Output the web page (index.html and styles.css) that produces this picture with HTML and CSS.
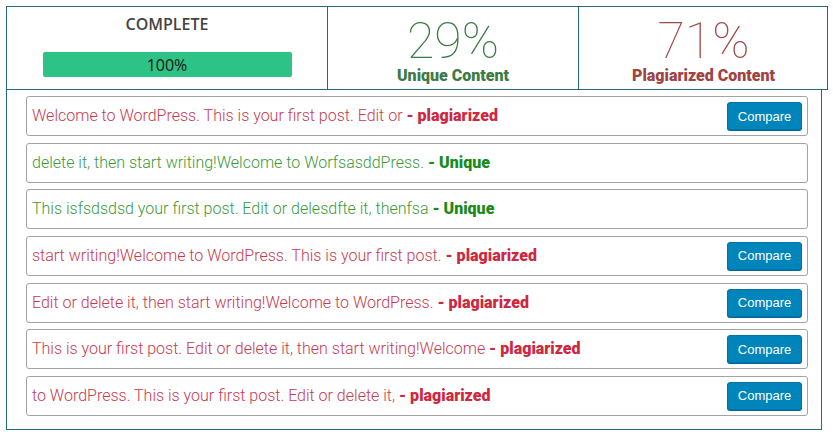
FILE: index.html
```html
<!DOCTYPE html>
<html>
<head>
<meta charset="utf-8">
<link rel="stylesheet" href="styles.css">
</head>
<body>
<div class="wrap">
  <div class="summary">
    <div class="cell cell-complete">
      <div class="complete-title">COMPLETE</div>
      <div class="bar"><span>100%</span></div>
    </div>
    <div class="cell cell-stat">
      <div class="pct pct-unique">29%</div>
      <div class="stat-label label-unique">Unique Content</div>
    </div>
    <div class="cell cell-stat">
      <div class="pct pct-plag">71%</div>
      <div class="stat-label label-plag">Plagiarized Content</div>
    </div>
  </div>
  <div class="results">
    <div class="row plag">
      <p class="sentence">Welcome to WordPress. This is your first post. Edit or <b>- plagiarized</b></p>
      <button class="compare">Compare</button>
    </div>
    <div class="row uniq">
      <p class="sentence">delete it, then start writing!Welcome to WorfsasddPress. <b>- Unique</b></p>
    </div>
    <div class="row uniq">
      <p class="sentence">This isfsdsdsd your first post. Edit or delesdfte it, thenfsa <b>- Unique</b></p>
    </div>
    <div class="row plag">
      <p class="sentence">start writing!Welcome to WordPress. This is your first post. <b>- plagiarized</b></p>
      <button class="compare">Compare</button>
    </div>
    <div class="row plag">
      <p class="sentence">Edit or delete it, then start writing!Welcome to WordPress. <b>- plagiarized</b></p>
      <button class="compare">Compare</button>
    </div>
    <div class="row plag">
      <p class="sentence">This is your first post. Edit or delete it, then start writing!Welcome <b>- plagiarized</b></p>
      <button class="compare">Compare</button>
    </div>
    <div class="row plag">
      <p class="sentence">to WordPress. This is your first post. Edit or delete it, <b>- plagiarized</b></p>
      <button class="compare">Compare</button>
    </div>
  </div>
</div>
</body>
</html>
```
FILE: styles.css
```css
* { box-sizing: border-box; }
html, body { margin: 0; padding: 0; background: #fff; }
body { font-family: Roboto, "Liberation Sans", sans-serif; }

.wrap {
  padding: 6px 0 0 6px;
  width: 833px;
}

.summary {
  display: grid;
  grid-template-columns: 320px 251px 250px;
  width: 822px;
  height: 84px;
  border: 1px solid #226c76;
}
.cell {
  display: flex;
  flex-direction: column;
  align-items: center;
}
.cell + .cell { border-left: 1px solid #226c76; }

.cell-complete { padding-top: 7px; }
.complete-title {
  font-family: "Open Sans", sans-serif;
  font-weight: 600;
  font-size: 16px;
  line-height: 20px;
  color: #444;
}
.bar {
  margin-top: 18px;
  width: 249px;
  height: 25px;
  background: #2dc386;
  border-radius: 2px;
  display: flex;
  align-items: center;
  justify-content: center;
  font-family: "Open Sans", sans-serif;
  font-size: 16px;
  color: #111;
}

.cell-stat { padding-top: 12px; }
.pct {
  font-family: Roboto, sans-serif;
  font-weight: 100;
  font-size: 50px;
  line-height: 44px;
}
.pct-unique { color: #3f7a47; }
.pct-plag { color: #a24a4a; }
.stat-label {
  margin-top: 4px;
  font-family: Roboto, sans-serif;
  font-weight: 900;
  font-size: 16px;
  line-height: 18px;
}
.label-unique { color: #3f7a45; }
.label-plag { color: #a04343; }

.results {
  width: 816px;
  border: 1px solid #226c76;
  border-top: none;
  padding: 6px 13px 13px 19px;
  display: flex;
  flex-direction: column;
  gap: 6.67px;
}
.row {
  height: 40px;
  border: 1px solid #a3a3a3;
  border-radius: 3px;
  display: flex;
  align-items: center;
  justify-content: space-between;
  padding: 0 5px 0 5px;
}
.sentence {
  margin: 0;
  font-family: Roboto, sans-serif;
  font-weight: 300;
  font-size: 16px;
  line-height: 18px;
}
.sentence b { font-weight: 900; }
.plag .sentence { color: #c73a4f; }
.plag .sentence b { color: #d0273f; }
.uniq .sentence { color: #3a9a3a; }
.uniq .sentence b { color: #1a8a1a; }

.compare {
  width: 75px;
  height: 28px;
  background: #0085ba;
  border: 1px solid #0073aa;
  border-radius: 3px;
  color: #fff;
  font-family: "Liberation Sans", Arial, sans-serif;
  font-size: 13px;
  padding: 0;
  box-shadow: 0 1px 0 #006799;
}
```
